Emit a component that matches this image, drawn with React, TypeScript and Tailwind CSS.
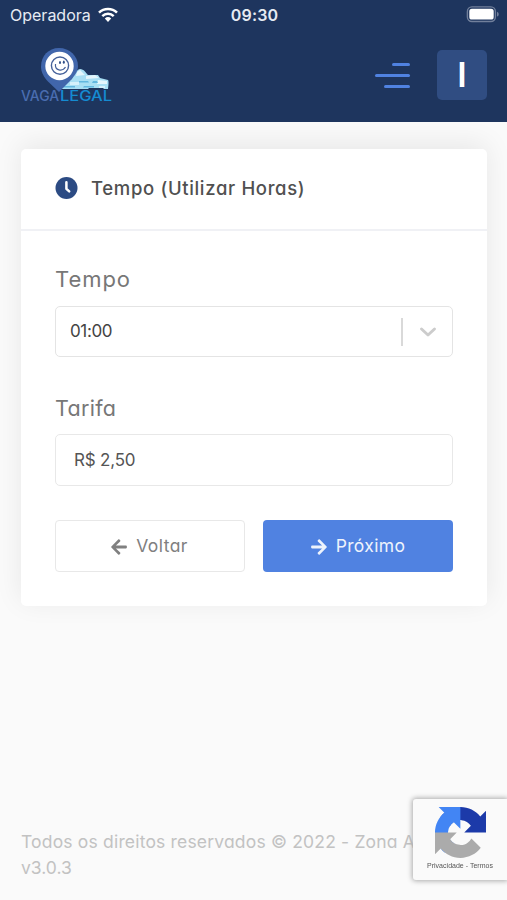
import React, { useState } from 'react';
import { FaArrowLeft, FaArrowRight } from 'react-icons/fa';
import { clsx } from 'clsx';

function StatusBar() {
  return (
    <div className="grid h-[30px] grid-cols-3 items-center pl-[10px] pr-[8px] text-[#e6ebf3] [font-feature-settings:normal]">
      <div className="flex items-center gap-[7px]">
        <span className="text-[16px] leading-[30px]">Operadora</span>
        <svg width="20" height="16" viewBox="0 0 20 16" fill="none" stroke="#fff">
          <path d="M1 5.6a13 13 0 0 1 18 0" strokeWidth="2.6" />
          <path d="M4.3 9.1a8.2 8.2 0 0 1 11.4 0" strokeWidth="2.5" />
          <path d="M6.8 11.6a4.7 4.7 0 0 1 6.4 0L10 15z" fill="#fff" stroke="none" />
        </svg>
      </div>
      <span className="text-center text-[16px] font-semibold tracking-[0.2px]">09:30</span>
      <svg className="-mt-px justify-self-end" width="33" height="17" viewBox="0 0 33 17">
        <rect x="1.4" y="0.9" width="28" height="14.6" rx="4.5" fill="none" stroke="#717f9b" strokeWidth="1.4" />
        <rect x="3.3" y="2.8" width="24.4" height="10.8" rx="2.6" fill="#fff" />
        <path d="M31 5.800c2.300.8 2.300 4 0 4.800z" fill="#717f9b" />
      </svg>
    </div>
  );
}

function Logo() {
  return (
    <svg width="92" height="58" viewBox="0 0 92 58">
      <g fill="#a9dff4">
        <path d="M40 42c2-6 7-8 11-10 1-4 4-9 8-10 4 0 6 4 8 6l10 0 2 3 8 2c1 1 .5 6 0 9h-4l-1-1H68l-1 1z" />
        <path d="M56 25l3-2 5 5-9 1zM65 29l9-1 4 3-13 1zM77 33l9 1 0 3-10 0z" fill="#e4f6fc" />
        <path d="M43 39h11v1.500H42zM58 34h9l1 1.500H58zM72 34h4l1 2h-6zM63 39h10v1.500H62z" fill="#62b7df" />
        <path d="M49 35h9v3h-9zM78 39h6v2h-6z" fill="#d5f1fb" />
      </g>
      <path d="M38 1C27.500 1 20 9.200 20 19.400c0 5.800 3 10.600 7 15.100L38 45l11-11c4-4.500 8-9 8-15C57 9 48.500 1 38 1z" fill="#4166ab" />
      <circle cx="38.500" cy="19" r="14.200" fill="#fff" />
      <circle cx="39" cy="18.600" r="8.600" fill="#fff" stroke="#45619a" strokeWidth="1.400" />
      <path d="M34.500 17c-1 6.500 7 8 10 3" fill="none" stroke="#45619a" strokeWidth="1.200" />
      <ellipse cx="39" cy="15.500" rx="1" ry="1.600" fill="#304f88" />
      <ellipse cx="42.800" cy="15.200" rx="1" ry="1.600" fill="#304f88" />
      <text x="0" y="54" fontSize="14" fontFamily="Inter, sans-serif" fontWeight="500" textLength="38" lengthAdjust="spacingAndGlyphs" fill="#4a6db0">VAGA</text>
      <text x="39" y="54" fontSize="14" fontFamily="Inter, sans-serif" fontWeight="500" textLength="52" lengthAdjust="spacingAndGlyphs" fill="#158bd2">LEGAL</text>
    </svg>
  );
}

function Header() {
  return (
    <header className="h-[122px] bg-[#1e355e]">
      <StatusBar />
      <div className="flex items-start justify-between pl-[21px] pr-5 pt-[17px]">
        <Logo />
        <div className="flex items-center gap-[27px] pt-[3px]">
          <button aria-label="Menu" className="flex w-[35px] flex-col items-end gap-2">
            <span className="h-[3px] w-[18px] rounded-sm bg-[#5082e1]" />
            <span className="h-[3px] w-[35px] rounded-sm bg-[#5082e1]" />
            <span className="h-[3px] w-[26px] rounded-sm bg-[#5082e1]" />
          </button>
          <div className="flex size-[50px] items-center justify-center rounded-[5px] bg-[#304d82] text-[34px] font-semibold leading-none text-white">
            I
          </div>
        </div>
      </div>
    </header>
  );
}

function ClockIcon() {
  return (
    <svg className="-mt-px" width="23" height="23" viewBox="0 0 23 23">
      <circle cx="11.500" cy="11" r="11" fill="#2c4b83" />
      <path d="M11.400 5.200v6.600l2.800 2.600" fill="none" stroke="#fff" strokeWidth="2.500" strokeLinecap="round" strokeLinejoin="round" />
    </svg>
  );
}

function RecaptchaBadge() {
  return (
    <div className="fixed bottom-[20px] right-0 flex h-[81px] w-[94px] flex-col items-center rounded-l-[3px] bg-[#fafafa] pt-[8px] shadow-[0_0_5px_1px_#aaa]">
      <svg width="51" height="51" viewBox="0 0 64 64">
        <path fill="#1c3aa9" d="M64 31.955l-.033-1.37V4.687l-7.160 7.160C50.948 4.674 42.033.093 32.050.093c-10.400 0-19.622 4.960-25.458 12.640l11.736 11.860a15.550 15.550 0 0 1 4.754-5.334c2.050-1.600 4.952-2.906 8.968-2.906.485 0 .860.057 1.135.163 4.976.393 9.288 3.140 11.828 7.124l-8.307 8.307L64 31.953" />
        <path fill="#4285f4" d="M31.862.094l-1.370.033H4.594l7.160 7.160C4.580 13.147 0 22.060 0 32.046c0 10.400 4.960 19.622 12.640 25.458L24.500 45.768a15.550 15.550 0 0 1-5.334-4.754c-1.600-2.050-2.906-4.952-2.906-8.968 0-.485.057-.860.163-1.135.393-4.976 3.140-9.288 7.124-11.828l8.307 8.307L31.860.095" />
        <path fill="#ababab" d="M.001 32.045l.033 1.370v25.898l7.160-7.160c5.860 7.173 14.774 11.754 24.760 11.754 10.400 0 19.622-4.960 25.458-12.640l-11.736-11.860a15.550 15.550 0 0 1-4.754 5.334c-2.050 1.600-4.952 2.906-8.968 2.906-.485 0-.860-.057-1.135-.163-4.976-.393-9.288-3.140-11.828-7.124l8.307-8.307c-10.522.040-22.400.066-27.295-.005" />
      </svg>
      <span className="mt-[2px] whitespace-nowrap font-['Liberation_Sans'] text-[7px] leading-[12px] tracking-[0.02px] text-[#555]">
        Privacidade - Termos
      </span>
    </div>
  );
}

export default function App() {
  const [tarifa, setTarifa] = useState('R$ 2,50');

  const buttonClass = 'flex h-[52px] items-center justify-center gap-2 rounded-[4px] pt-px text-[17.5px]';

  return (
    <div className="flex min-h-screen flex-col overflow-hidden bg-[#fafafa] font-[Inter,sans-serif] [font-feature-settings:'cv11']">
      <Header />
      <main className="pl-[21px] pr-5 pt-[27px]">
        <section className="h-[457px] rounded-[5px] bg-white shadow-[0_-5px_28px_rgba(0,0,0,0.08)]">
          <div className="flex h-[82px] items-center gap-[13px] border-b-2 border-[#f0f1f5] pl-[34px]">
            <ClockIcon />
            <h1 className="whitespace-nowrap text-[18.5px] font-medium tracking-[0.66px] text-[#505050]">
              Tempo (Utilizar Horas)
            </h1>
          </div>
          <div className="px-[34px] pt-[33px]">
            <label className="block text-[22px] leading-[30px] tracking-[0.95px] text-[#777]">Tempo</label>
            <button className="mt-[12px] flex h-[51px] w-full items-center rounded-[5px] border-[1.5px] border-[#e4e4e4] pl-[14px] text-left">
              <span className="flex-1 text-[17px] tracking-[-0.35px] text-[#444]">01:00</span>
              <span className="h-[28px] w-[2px] bg-[#d9d9d9]" />
              <svg className="ml-[16px] mr-[15px]" width="18" height="12" viewBox="0 0 18 12" fill="none">
                <path d="M2.500 3L9 9l6.500-6" stroke="#ccc" strokeWidth="2.900" strokeLinecap="round" strokeLinejoin="round" />
              </svg>
            </button>
            <label htmlFor="tarifa" className="mt-[36px] block text-[21.5px] leading-[30px] tracking-[0.3px] text-[#777]">
              Tarifa
            </label>
            <input
              id="tarifa"
              value={tarifa}
              onChange={(e) => setTarifa(e.target.value)}
              className="mt-[11px] block h-[52px] w-full rounded-[5px] border-[1.5px] border-[#e8e8e8] pl-[18px] text-[17px] tracking-[-0.2px] text-[#555] outline-none"
            />
            <div className="mt-[34px] grid grid-cols-2 gap-[18px]">
              <button className={clsx(buttonClass, 'border-[1.5px] border-[#e8e8e8] pr-[2px] text-[#808080]')}>
                <FaArrowLeft size={18} />
                <span className="tracking-[0.45px]">Voltar</span>
              </button>
              <button className={clsx(buttonClass, 'bg-[#5082e1] pr-px text-[#eef3fc]')}>
                <FaArrowRight size={18} />
                <span className="tracking-[0.35px]">Próximo</span>
              </button>
            </div>
          </div>
        </section>
      </main>
      <footer className="mt-auto px-[21px] pb-[19px] text-[17.5px] leading-[26px] text-[#c2c2c2]">
        <p className="whitespace-nowrap tracking-[0.18px]">Todos os direitos reservados © 2022 - Zona A</p>
        <p>v3.0.3</p>
      </footer>
      <RecaptchaBadge />
    </div>
  );
}
